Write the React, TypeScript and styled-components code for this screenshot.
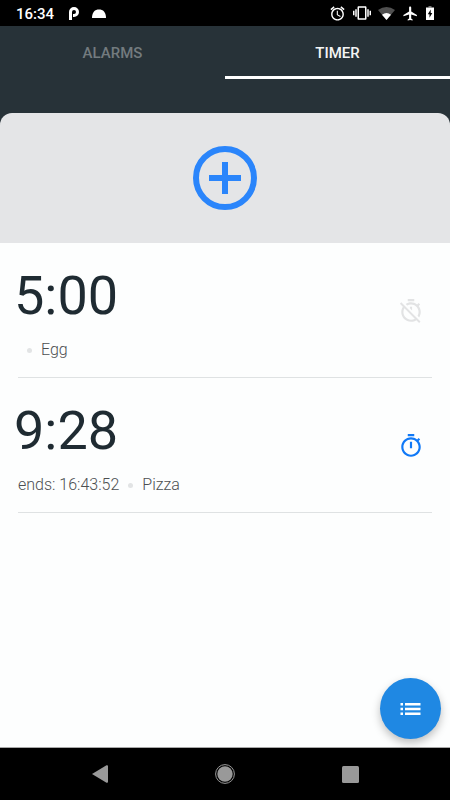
import React from "react";
import styled, { createGlobalStyle } from "styled-components";

const GlobalStyle = createGlobalStyle`
  *, *::before, *::after { box-sizing: border-box; }
  body { margin: 0; background: #fdfefe; font-family: Roboto, "Noto Sans", sans-serif; }
  button { border: 0; padding: 0; background: none; font: inherit; color: inherit; cursor: pointer; }
  svg { display: block; }
`;

const Screen = styled.div`
  display: flex;
  flex-direction: column;
  min-height: 100vh;
`;

const StatusBar = styled.div`
  display: flex;
  align-items: center;
  justify-content: space-between;
  height: 26px;
  padding: 0 16px;
  background: #000;
  color: #fff;
`;

const StatusGroup = styled.div<{ $gap: number }>`
  display: flex;
  align-items: center;
  gap: ${(p) => p.$gap}px;
`;

const Clock = styled.time`
  font-size: 15px;
  line-height: 26px;
  font-weight: 500;
  padding-top: 2px;
`;

const Header = styled.header`
  background: #273238;
`;

const Tabs = styled.div`
  display: grid;
  grid-template-columns: 1fr 1fr;
  margin-bottom: 34px;
`;

const Tab = styled.button<{ $active?: boolean }>`
  height: 53px;
  border-bottom: 3px solid ${(p) => (p.$active ? "#fff" : "transparent")};
  padding-top: 4px;
  font-size: 15px;
  font-weight: 500;
  color: ${(p) => (p.$active ? "#f4f5f5" : "#737b7f")};
`;

const AddButton = styled.button`
  display: flex;
  align-items: center;
  justify-content: center;
  width: 100%;
  height: 130px;
  border-radius: 12px 12px 0 0;
  background: #e4e5e7;
  color: #2a85fb;
`;

const Content = styled.main`
  position: relative;
  flex: 1;
  background: #fdfefe;
`;

const TimerList = styled.ul`
  list-style: none;
  margin: 0;
  padding: 0 18px;
`;

const TimerRow = styled.li`
  display: flex;
  align-items: center;
  justify-content: space-between;
  height: 135px;
  padding: 2px 8px 0 0;
  border-bottom: 1px solid #dfe2e3;
`;

const TimerInfo = styled.div`
  display: flex;
  flex-direction: column;
  gap: 12px;
  margin-left: -4px;
  padding-top: 2px;
`;

const Duration = styled.div`
  font-size: 54px;
  line-height: 64px;
  color: #1f2b32;
`;

const Details = styled.div`
  display: flex;
  align-items: center;
  gap: 9px;
  padding-left: 4px;
  font-size: 16px;
  line-height: 20px;
  font-weight: 300;
  color: #4c4f51;
`;

const Dot = styled.span`
  width: 5px;
  height: 5px;
  border-radius: 50%;
  background: #e2e4e5;
`;

const Toggle = styled.button<{ $on: boolean }>`
  color: ${(p) => (p.$on ? "#1079f7" : "#e2e3e4")};
`;

const Fab = styled.button`
  position: absolute;
  right: 9px;
  bottom: 8px;
  display: flex;
  align-items: center;
  justify-content: center;
  width: 61px;
  height: 61px;
  border-radius: 50%;
  background: #1f88e3;
  color: #fff;
  box-shadow: 0 4px 8px rgba(0, 0, 0, 0.25);
`;

const NavBar = styled.nav`
  display: flex;
  align-items: center;
  justify-content: center;
  gap: 101px;
  height: 53px;
  border-top: 1px solid #a8a8a8;
  background: #000;
  color: #999;
`;

const NavButton = styled.button`
  display: flex;
  justify-content: center;
  width: 24px;
`;

const TIMER_ON =
  "M15 1H9v2h6V1zm-4 13h2V8h-2v6zm8.03-6.61l1.42-1.42c-.43-.51-.9-.99-1.41-1.41l-1.42 1.42C16.07 4.74 14.12 4 12 4c-4.97 0-9 4.03-9 9s4.02 9 9 9 9-4.03 9-9c0-2.12-.74-4.07-1.97-5.61zM12 20c-3.87 0-7-3.13-7-7s3.13-7 7-7 7 3.13 7 7-3.13 7-7 7z";
const TIMER_OFF =
  "M19.04 4.55l-1.42 1.42C16.07 4.74 14.12 4 12 4c-1.83 0-3.53.55-4.95 1.48l1.46 1.46C9.53 6.35 10.73 6 12 6c3.87 0 7 3.13 7 7 0 1.27-.35 2.47-.94 3.49l1.45 1.45C20.45 16.53 21 14.83 21 13c0-2.12-.74-4.07-1.97-5.61l1.42-1.42-1.41-1.42zM15 1H9v2h6V1zm-4 8.44l2 2V8h-2v1.44zM3.02 4L1.75 5.27 4.5 8.03C3.55 9.45 3 11.16 3 13c0 4.97 4.02 9 9 9 1.84 0 3.55-.55 4.98-1.5l2.5 2.5 1.27-1.27-7.71-7.71L3.02 4zM12 20c-3.87 0-7-3.13-7-7 0-1.28.35-2.48.95-3.52l9.56 9.56c-1.03.61-2.23.96-3.51.96z";
const ALARM =
  "M22 5.72l-4.6-3.86-1.29 1.53 4.6 3.86L22 5.72zM7.88 3.39L6.6 1.86 2 5.71l1.29 1.53 4.59-3.85zM12.5 8H11v6l4.75 2.85.75-1.23-4-2.37V8zM12 4c-4.97 0-9 4.03-9 9s4.02 9 9 9c4.97 0 9-4.03 9-9s-4.03-9-9-9zm0 16c-3.87 0-7-3.13-7-7s3.13-7 7-7 7 3.13 7 7-3.13 7-7 7z";
const VIBRATE =
  "M0 15h2V9H0v6zm3 2h2V7H3v10zm19-8v6h2V9h-2zm-3 8h2V7h-2v10zM16.5 3h-9C6.67 3 6 3.67 6 4.5v15c0 .83.67 1.5 1.5 1.5h9c.83 0 1.5-.67 1.5-1.5v-15c0-.83-.67-1.5-1.5-1.5zM16 19H8V5h8v14z";
const PLANE =
  "M21 16v-2l-8-5V3.5c0-.83-.67-1.5-1.5-1.5S10 2.67 10 3.5V9l-8 5v2l8-2.5V19l-2 1.5V22l3.5-1 3.5 1v-1.5L13 19v-5.5l8 2.5z";

interface GlyphProps {
  d: string;
  size: number;
}

const Glyph = ({ d, size }: GlyphProps) => (
  <svg width={size} height={size} viewBox="0 0 24 24" fill="currentColor" aria-hidden="true">
    <path d={d} />
  </svg>
);

interface Timer {
  duration: string;
  ends?: string;
  label: string;
  running: boolean;
}

const timers: Timer[] = [
  { duration: "5:00", label: "Egg", running: false },
  { duration: "9:28", ends: "ends: 16:43:52", label: "Pizza", running: true },
];

export default function App() {
  return (
    <Screen>
      <GlobalStyle />
      <StatusBar>
        <StatusGroup $gap={13}>
          <Clock>16:34</Clock>
          <svg width="12" height="13" viewBox="-2 0 12 13" fill="none" stroke="#fff" aria-hidden="true">
            <path d="M1.500 13V5a3.500 3.500 0 1 1 3.500 3.500H4" strokeWidth="3" />
          </svg>
          <svg width="14" height="9" viewBox="0 0 14 9" fill="#fff" aria-hidden="true">
            <path d="M0 9C0 3 3 0.500 7 0.500s7 2.500 7 8.500z" />
          </svg>
        </StatusGroup>
        <StatusGroup $gap={7}>
          <Glyph d={ALARM} size={17} />
          <Glyph d={VIBRATE} size={18} />
          <svg width="17" height="13" viewBox="0 0 17 13" aria-hidden="true">
            <path d="M0 3Q8.500-3 17 3L8.500 13z" fill="#505050" />
            <path d="M4 7.700Q8.500 4.500 13 7.700L8.500 13z" fill="#fff" />
          </svg>
          <Glyph d={PLANE} size={17} />
          <svg width="8" height="14" viewBox="0 0 8 14" aria-hidden="true">
            <path d="M2.500 0h3v1.500h-3z" fill="#777" />
            <path d="M0 1.500h8V14H0z" fill="#fff" />
            <path d="M4.700 3.500L1.800 8.200h1.700v3.600l2.800-4.900H4.700z" fill="#000" />
          </svg>
        </StatusGroup>
      </StatusBar>

      <Header>
        <Tabs role="tablist">
          <Tab role="tab" aria-selected={false}>ALARMS</Tab>
          <Tab role="tab" aria-selected={true} $active>TIMER</Tab>
        </Tabs>
        <AddButton aria-label="Add timer">
          <svg width="64" height="64" viewBox="0 0 64 64" fill="none" stroke="currentColor" strokeWidth="6" aria-hidden="true">
            <circle cx="32" cy="32" r="29" />
            <path d="M32 16v32M16 32h32" />
          </svg>
        </AddButton>
      </Header>

      <Content>
        <TimerList>
          {timers.map((t) => (
            <TimerRow key={t.label}>
              <TimerInfo>
                <Duration>{t.duration}</Duration>
                <Details>
                  {t.ends ? <span>{t.ends}</span> : <span />}
                  <Dot />
                  <span>{t.label}</span>
                </Details>
              </TimerInfo>
              <Toggle $on={t.running} aria-pressed={t.running} aria-label={`${t.label} timer`}>
                <Glyph d={t.running ? TIMER_ON : TIMER_OFF} size={26} />
              </Toggle>
            </TimerRow>
          ))}
        </TimerList>
        <Fab aria-label="Timer list">
          <svg width="21" height="12" viewBox="0 0 21 12" fill="currentColor" aria-hidden="true">
            <path d="M0.500 0h2.500v2.400H0.500zM0.500 4.800h2.500v2.400H0.500zM0.500 9.600h2.500v2.400H0.500zM5 0h15.500v2.400H5zM5 4.800h15.500v2.400H5zM5 9.600h15.500v2.400H5z" />
          </svg>
        </Fab>
      </Content>

      <NavBar>
        <NavButton aria-label="Back">
          <svg width="16" height="18" viewBox="0 0 16 18" fill="currentColor" aria-hidden="true">
            <path d="M0 9L14.500 0.300Q16 0 16 1v16q0 1-1.500.7z" />
          </svg>
        </NavButton>
        <NavButton aria-label="Home">
          <svg width="20" height="20" viewBox="0 0 20 20" fill="currentColor" aria-hidden="true">
            <circle cx="10" cy="10" r="7.700" />
            <circle cx="10" cy="10" r="9.400" fill="none" stroke="currentColor" />
          </svg>
        </NavButton>
        <NavButton aria-label="Recent apps">
          <svg width="17" height="17" viewBox="0 0 17 17" fill="currentColor" aria-hidden="true">
            <rect width="17" height="17" rx="1.500" />
          </svg>
        </NavButton>
      </NavBar>
    </Screen>
  );
}
